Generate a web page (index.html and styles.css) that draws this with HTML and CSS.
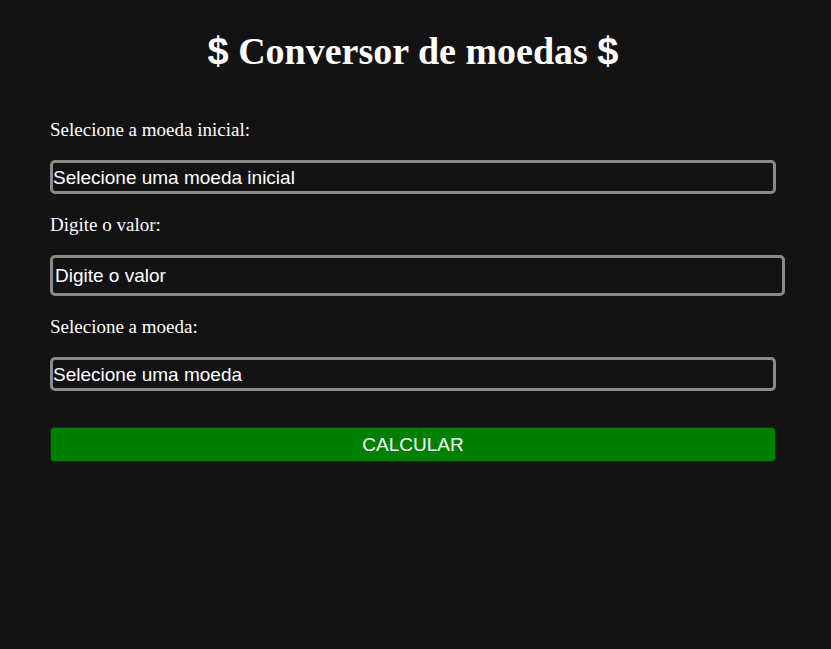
FILE: index.html
```html
<!DOCTYPE html>
<html lang="pt">
<head>
<meta charset="utf-8">
<title>Conversor de moedas</title>
<link rel="stylesheet" href="styles.css">
</head>
<body>
<main class="app">
  <h1 class="title"><span class="dollar">$</span> Conversor de moedas <span class="dollar">$</span></h1>
  <form class="form">
    <label class="label" for="from">Selecione a moeda inicial:</label>
    <select class="select" id="from"><option>Selecione uma moeda inicial</option></select>
    <label class="label" for="value">Digite o valor:</label>
    <input class="input" id="value" type="text" placeholder="Digite o valor">
    <label class="label" for="to">Selecione a moeda:</label>
    <select class="select" id="to"><option>Selecione uma moeda</option></select>
    <button class="button" type="button">CALCULAR</button>
  </form>
</main>
</body>
</html>
```
FILE: styles.css
```css
html, body {
  margin: 0;
  background: #131315;
  color: #ffffff;
  font-family: "Liberation Serif", "Times New Roman", serif;
}
.app {
  margin: 0 55px 0 50px;
  padding-top: 29px;
}
.title {
  margin: 0 0 46px 0;
  text-align: center;
  font-size: 38px;
  line-height: 44px;
  font-weight: bold;
}
.dollar {
  font-family: "Liberation Sans", Arial, sans-serif;
}
.form {
  display: flex;
  flex-direction: column;
  align-items: flex-start;
}
.label {
  font-size: 19px;
  line-height: 22px;
  margin-bottom: 19px;
}
.select {
  width: 100%;
  box-sizing: border-box;
  height: 34px;
  background: #131315;
  color: #ffffff;
  border: 3px solid #8a8a8a;
  border-radius: 5px;
  font-family: "Liberation Sans", Arial, sans-serif;
  font-size: 19px;
  padding: 0;
  margin-bottom: 20px;
  appearance: none;
  -webkit-appearance: none;
}
.input {
  height: 41px;
  box-sizing: border-box;
  width: calc(100% + 9px);
  background: #131315;
  color: #ffffff;
  border: 3px solid #8a8a8a;
  border-radius: 5px;
  font-family: "Liberation Sans", Arial, sans-serif;
  font-size: 19px;
  padding: 0 2px;
  margin-bottom: 20px;
}
.input::placeholder {
  color: #ffffff;
  opacity: 1;
}
.button {
  width: 100%;
  height: 35px;
  box-sizing: border-box;
  margin-top: 16px;
  background: #008000;
  color: #ffffff;
  border: 1px solid #0b3a0b;
  border-radius: 4px;
  font-family: "Liberation Sans", Arial, sans-serif;
  font-size: 19px;
  padding: 0;
}
```
